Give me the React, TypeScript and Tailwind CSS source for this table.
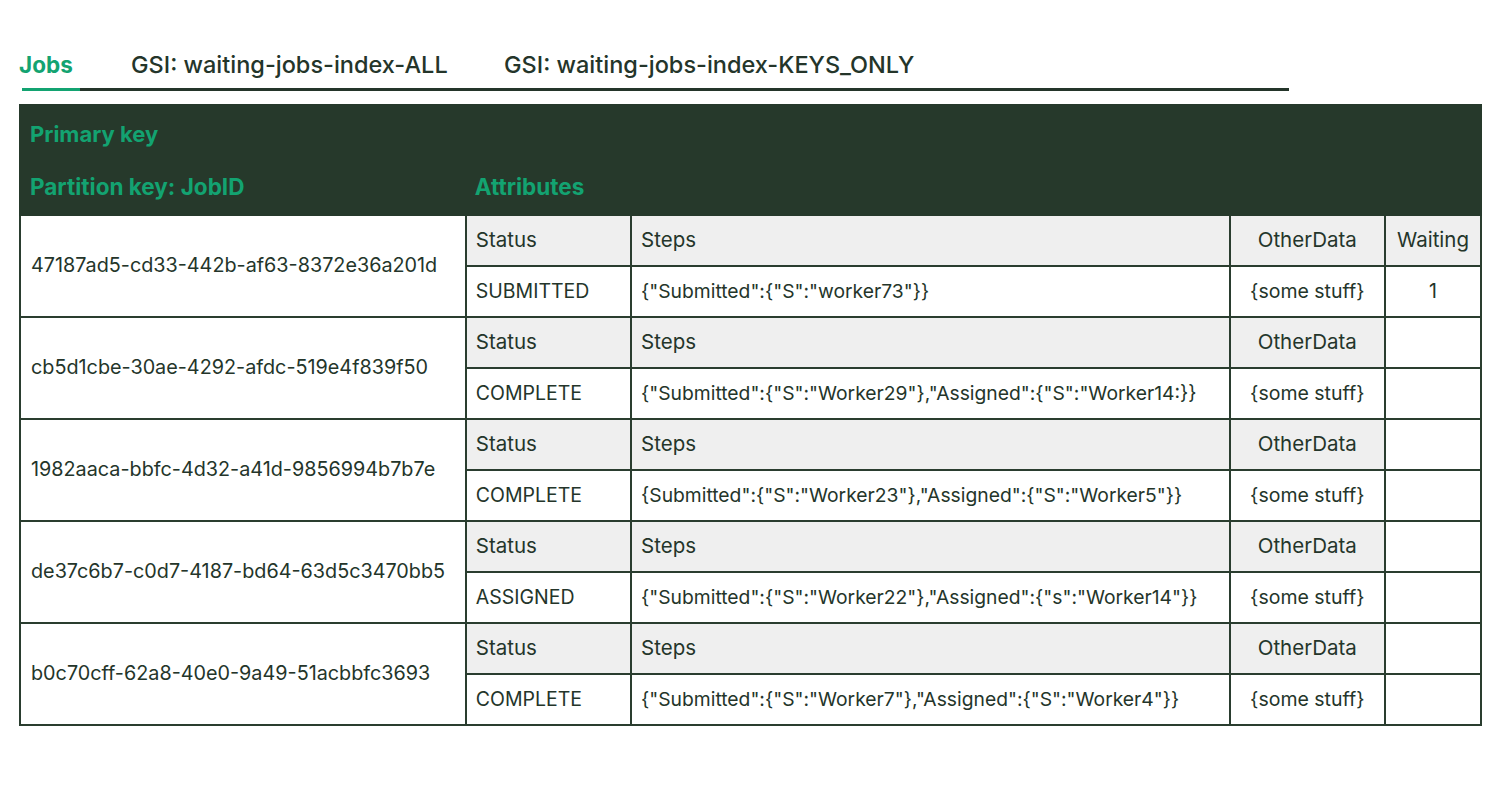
const jobs = [
  {
    id: '47187ad5-cd33-442b-af63-8372e36a201d',
    status: 'SUBMITTED',
    steps: '{"Submitted":{"S":"worker73"}}',
    waiting: '1',
  },
  {
    id: 'cb5d1cbe-30ae-4292-afdc-519e4f839f50',
    status: 'COMPLETE',
    steps: '{"Submitted":{"S":"Worker29"},"Assigned":{"S":"Worker14:}}',
  },
  {
    id: '1982aaca-bbfc-4d32-a41d-9856994b7b7e',
    status: 'COMPLETE',
    steps: '{Submitted":{"S":"Worker23"},"Assigned":{"S":"Worker5"}}',
  },
  {
    id: 'de37c6b7-c0d7-4187-bd64-63d5c3470bb5',
    status: 'ASSIGNED',
    steps: '{"Submitted":{"S":"Worker22"},"Assigned":{"s":"Worker14"}}',
  },
  {
    id: 'b0c70cff-62a8-40e0-9a49-51acbbfc3693',
    status: 'COMPLETE',
    steps: '{"Submitted":{"S":"Worker7"},"Assigned":{"S":"Worker4"}}',
  },
];

const cell = 'border-2 border-[#2a3d2f] h-[51px] px-[9px] align-middle whitespace-nowrap';
const head = cell + ' bg-[#efefef] text-[20.5px]';

export default function App() {
  return (
    <div
      className="w-[1500px] h-[800px] bg-white text-[#24352a]"
      style={{ fontFamily: 'Inter, "Liberation Sans", sans-serif' }}
    >
      <div className="pt-[50px] pl-[19px] w-[1289px]">
        <div className="flex text-[23.5px] leading-[30px] font-medium">
          <div className="w-[112px] text-[#13a371] font-bold text-[22.5px]">Jobs</div>
          <div className="w-[373px]">GSI: waiting-jobs-index-ALL</div>
          <div>GSI: waiting-jobs-index-KEYS_ONLY</div>
        </div>
        <div className="mt-[8px] ml-[3px] flex h-[3px]">
          <div className="w-[58px] bg-[#13a371]" />
          <div className="flex-1 bg-[#24352a]" />
        </div>
      </div>

      <div className="pl-[19px] pt-[13px]">
        <table className="w-[1463px] border-collapse text-[19.5px]">
          <colgroup>
            <col className="w-[446px]" />
            <col className="w-[166px]" />
            <col className="w-[599px]" />
            <col className="w-[156px]" />
            <col className="w-[96px]" />
          </colgroup>
          <thead>
            <tr className="bg-[#26392b]">
              <th
                colSpan={5}
                className="h-[55px] pt-[2px] px-[9px] text-left font-bold text-[#13a371] text-[22px] border-2 border-[#26392b] border-b-0"
              >
                Primary key
              </th>
            </tr>
            <tr className="bg-[#26392b]">
              <th className="h-[55px] px-[9px] text-left font-bold text-[#13a371] text-[22.5px] border-2 border-[#26392b] border-t-0 border-r-0">
                Partition key: JobID
              </th>
              <th
                colSpan={4}
                className="h-[55px] px-[9px] text-left font-bold text-[#13a371] text-[22.5px] border-2 border-[#26392b] border-t-0 border-l-0"
              >
                Attributes
              </th>
            </tr>
          </thead>
          <tbody>
            {jobs.map((j) => (
              <>
                <tr key={j.id + 'h'}>
                  <td rowSpan={2} className={cell + ' px-[10px] text-[19.8px]'}>
                    {j.id}
                  </td>
                  <td className={head}>Status</td>
                  <td className={head}>Steps</td>
                  <td className={head + ' text-center'}>OtherData</td>
                  <td className={j.waiting ? head + ' text-center' : cell}>
                    {j.waiting ? 'Waiting' : ''}
                  </td>
                </tr>
                <tr key={j.id + 'v'}>
                  <td className={cell}>{j.status}</td>
                  <td className={cell + ' text-[19.3px]'}>{j.steps}</td>
                  <td className={cell + ' text-center'}>{'{some stuff}'}</td>
                  <td className={cell + ' text-center'}>{j.waiting ?? ''}</td>
                </tr>
              </>
            ))}
          </tbody>
        </table>
      </div>
    </div>
  );
}
